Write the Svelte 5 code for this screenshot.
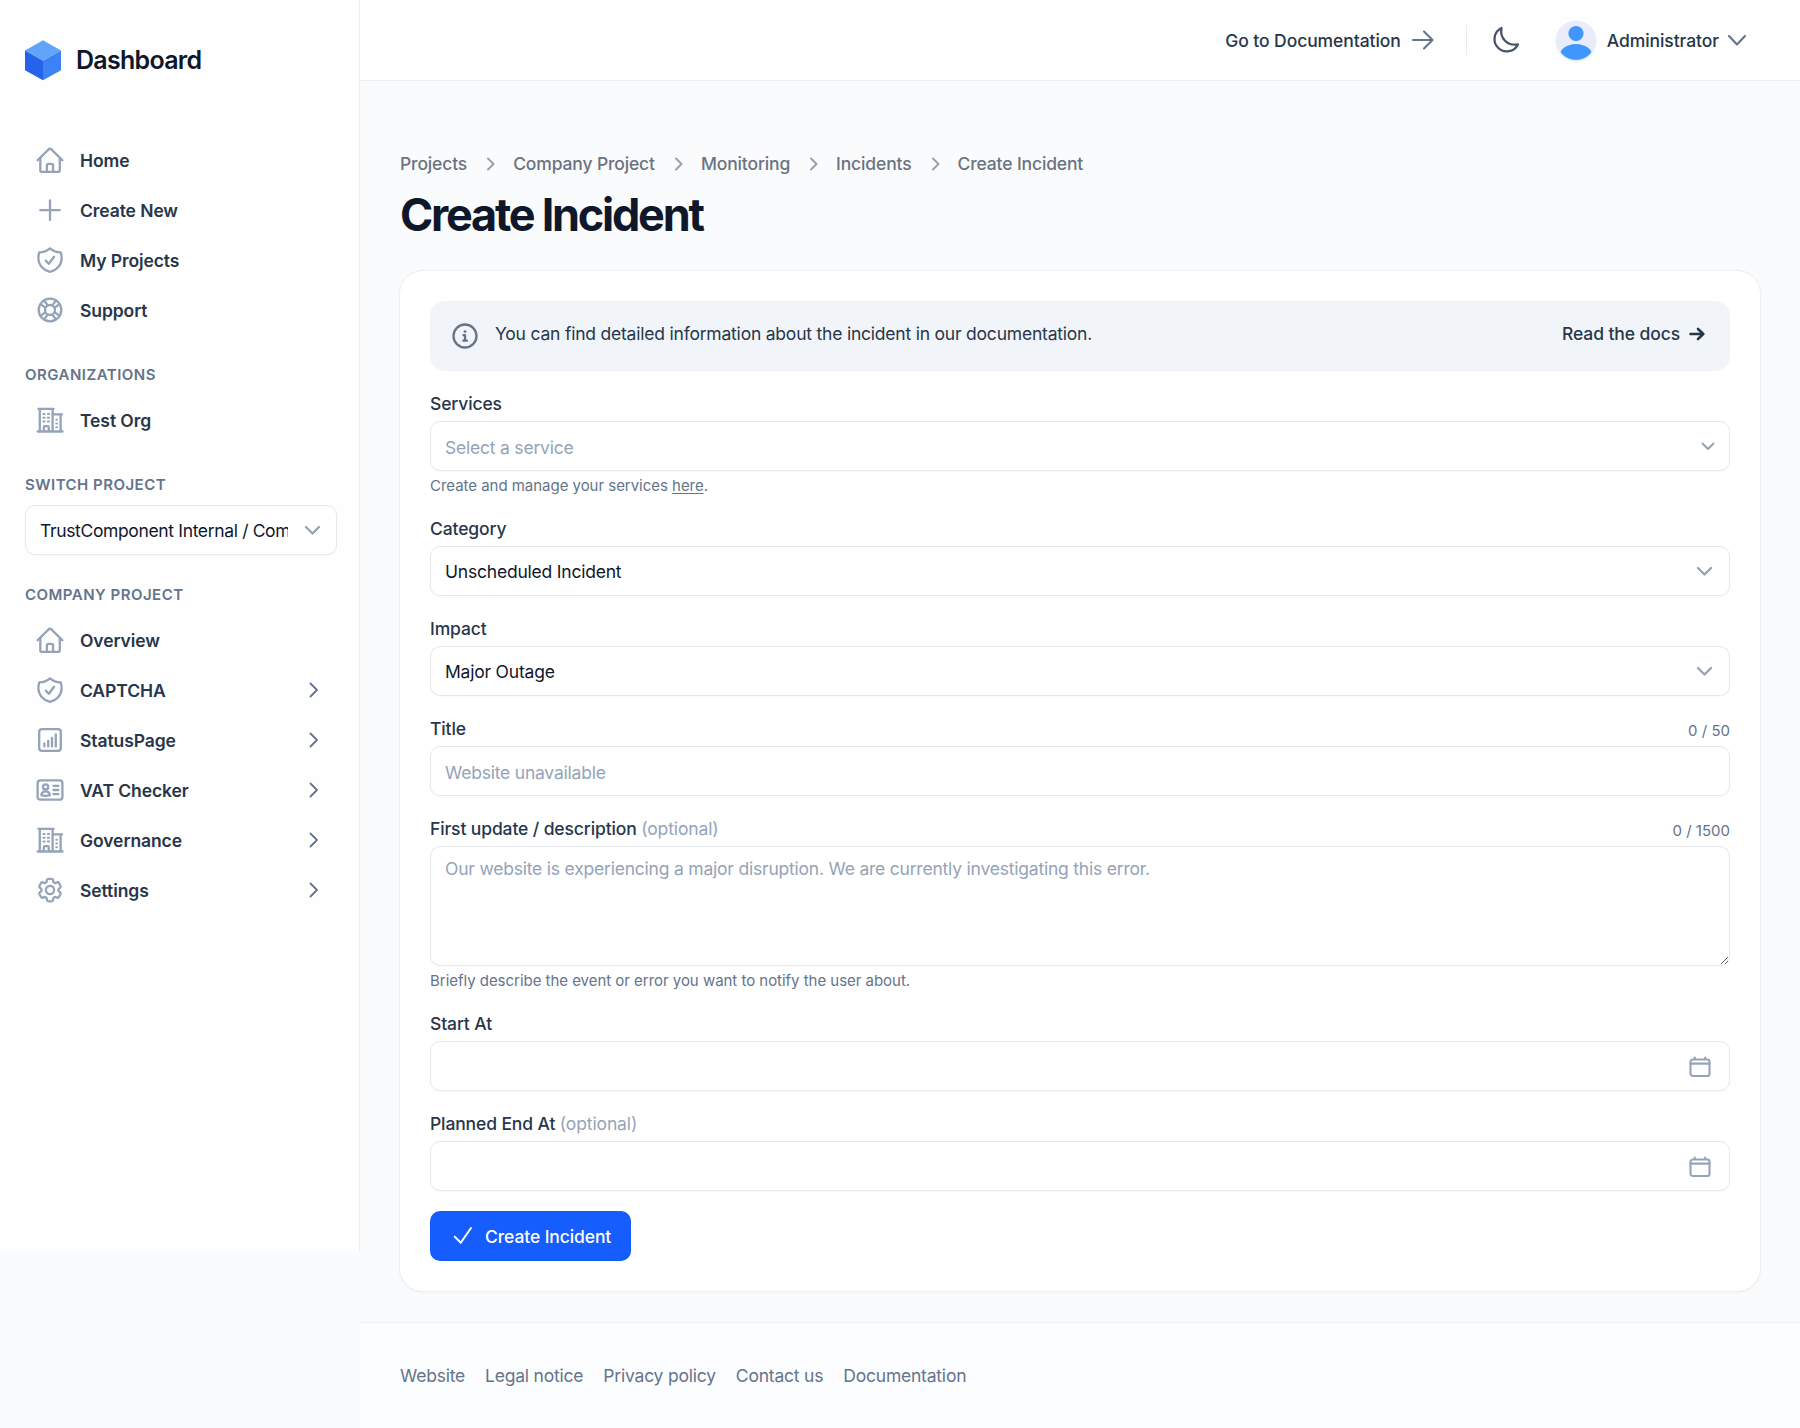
<script lang="ts">
  type NavItem = { label: string; icon: string; children?: boolean };

  const mainNav: NavItem[] = [
    { label: 'Home', icon: 'home' },
    { label: 'Create New', icon: 'plus' },
    { label: 'My Projects', icon: 'shield' },
    { label: 'Support', icon: 'support' },
  ];

  const orgNav: NavItem[] = [{ label: 'Test Org', icon: 'building' }];

  const projectNav: NavItem[] = [
    { label: 'Overview', icon: 'home' },
    { label: 'CAPTCHA', icon: 'shield', children: true },
    { label: 'StatusPage', icon: 'chart', children: true },
    { label: 'VAT Checker', icon: 'card', children: true },
    { label: 'Governance', icon: 'building', children: true },
    { label: 'Settings', icon: 'cog', children: true },
  ];

  const crumbs = ['Projects', 'Company Project', 'Monitoring', 'Incidents', 'Create Incident'];
  const footerLinks = ['Website', 'Legal notice', 'Privacy policy', 'Contact us', 'Documentation'];

  let title = $state('');
  let description = $state('');
  let startAt = $state('');
  let endAt = $state('');
</script>

{#snippet icon(name: string)}
  <svg class="icon" viewBox="0 0 30 30" aria-hidden="true">
    {#if name === 'home'}
      <path d="M2.6 15.3 13.9 4.1a1.5 1.5 0 0 1 2.2 0l11.3 11.2" />
      <path d="M5.3 13v12.2c0 .9.7 1.6 1.6 1.6h16.3c.9 0 1.6-.7 1.6-1.6V13" />
      <path d="M11.9 26.5v-6c0-.9.7-1.6 1.6-1.6h3c.9 0 1.6.7 1.6 1.6v6" />
    {:else if name === 'plus'}
      <path d="M15 5.3v19.6M5.2 15.1h19.6" />
    {:else if name === 'shield'}
      <path d="M15 3.4c-3 2.6-6.5 3.9-10.7 3.9-.7 2.1-1 4.2-.9 6.4.2 6.1 4.7 11.5 11.6 13.1 6.9-1.6 11.4-7 11.6-13.1.1-2.2-.2-4.3-.9-6.4-4.2 0-7.7-1.3-10.7-3.9Z" />
      <path d="m10.8 15.7 3 3.1 5.3-7" />
    {:else if name === 'support'}
      <circle cx="15" cy="15" r="11.3" />
      <circle cx="15" cy="15" r="5" />
      <path d="m9.1 5.6 3.5 4.6M5.6 9.1l4.6 3.5M20.9 5.6l-3.5 4.6M24.4 9.1l-4.6 3.5M9.1 24.4l3.5-4.6M5.6 20.9l4.6-3.5M20.9 24.4l-3.5-4.6M24.4 20.9l-4.6-3.5" />
    {:else if name === 'building'}
      <path d="M2.7 26.5h24.8M3.4 3.8h15.2M4.8 4v22.3M17.6 4v22.3M18 9.4h9M25.6 9.6v16.7M8.8 26v-3.6c0-.7.5-1.2 1.2-1.2h2.6c.7 0 1.2.5 1.2 1.2V26" />
      <path class="windows" d="M8.4 8.9h1.2M12.9 8.9h1.2M8.4 12.7h1.2M12.9 12.7h1.2M8.4 16.5h1.2M12.9 16.5h1.2M21.3 14.8h.6M21.3 18.5h.6M21.3 22.2h.6" />
    {:else if name === 'chart'}
      <rect x="4.2" y="4.2" width="21.6" height="21.6" rx="2.8" />
      <path d="M9.4 18.4v3M13.2 15.8v5.6M17 12.8v8.6M20.8 9.4v12" />
    {:else if name === 'card'}
      <rect x="2.6" y="5.4" width="24.8" height="19.3" rx="2.8" />
      <circle cx="10.6" cy="11.9" r="2.6" />
      <path d="M6.3 20.1c.4-2.4 2-3.7 4.3-3.7s3.9 1.3 4.3 3.7c-2.8.9-5.8.9-8.6 0ZM18.5 10.8h4.9M18.5 15h4.9M18.5 19.2h4.9" />
    {:else if name === 'cog'}
      <g transform="scale(1.25)">
        <path class="scaled" d="M9.594 3.94c.09-.542.56-.94 1.11-.94h2.593c.55 0 1.02.398 1.11.94l.213 1.281c.063.374.313.686.645.87.074.04.147.083.22.127.325.196.72.257 1.075.124l1.217-.456a1.125 1.125 0 0 1 1.37.49l1.296 2.247a1.125 1.125 0 0 1-.26 1.431l-1.003.827c-.293.241-.438.613-.43.992a7.723 7.723 0 0 1 0 .255c-.008.378.137.75.43.991l1.004.827c.424.35.534.955.26 1.43l-1.298 2.247a1.125 1.125 0 0 1-1.369.491l-1.217-.456c-.355-.133-.75-.072-1.076.124a6.47 6.47 0 0 1-.22.128c-.331.183-.581.495-.644.869l-.213 1.281c-.09.543-.56.94-1.11.94h-2.594c-.55 0-1.019-.398-1.11-.94l-.213-1.281c-.062-.374-.312-.686-.644-.87a6.52 6.52 0 0 1-.22-.127c-.325-.196-.72-.257-1.076-.124l-1.217.456a1.125 1.125 0 0 1-1.369-.49l-1.297-2.247a1.125 1.125 0 0 1 .26-1.431l1.004-.827c.292-.24.437-.613.43-.991a6.932 6.932 0 0 1 0-.255c.007-.38-.138-.751-.43-.992l-1.004-.827a1.125 1.125 0 0 1-.26-1.43l1.297-2.247a1.125 1.125 0 0 1 1.37-.491l1.216.456c.356.133.751.072 1.076-.124.072-.044.146-.087.22-.128.332-.183.582-.495.644-.869l.214-1.28Z" />
        <circle class="scaled" cx="12" cy="12" r="3.3" />
      </g>
    {/if}
  </svg>
{/snippet}

{#snippet navList(items: NavItem[])}
  <ul class="nav">
    {#each items as item}
      <li class="nav-item">
        {@render icon(item.icon)}
        <span class="nav-label">{item.label}</span>
        {#if item.children}
          <svg class="nav-chevron" width="10" height="16" viewBox="0 0 10 16"><path d="m1.5 1.5 6.5 6.5-6.5 6.5" /></svg>
        {/if}
      </li>
    {/each}
  </ul>
{/snippet}

{#snippet chevronDown()}
  <svg class="chevron-down" width="17" height="11" viewBox="0 0 17 11"><path d="m2 2 6.5 6.5L15 2" /></svg>
{/snippet}

{#snippet calendar()}
  <svg class="calendar" width="24" height="24" viewBox="0 0 24 24">
    <rect x="2.5" y="4.5" width="19" height="16.5" rx="2.3" />
    <path d="M2.5 8.6h19M6.8 4V2.6M17.2 4V2.6" />
  </svg>
{/snippet}

<div class="layout">
  <aside class="sidebar">
    <div class="brand">
      <svg width="37" height="40" viewBox="0 0 37 40">
        <path fill="#60a5fa" d="M18 .3 36 10.500 18 20.800 0 10.500Z" />
        <path fill="#2563eb" d="M0 10.500 18 20.800V40.300L0 30.300Z" />
        <path fill="#3b82f6" d="M36 10.500 18 20.800V40.300l18-10Z" />
      </svg>
      <span class="brand-name">Dashboard</span>
    </div>

    {@render navList(mainNav)}

    <h2 class="section-label">Organizations</h2>
    {@render navList(orgNav)}

    <h2 class="section-label">Switch Project</h2>
    <button class="control project-select">
      <span class="clip">TrustComponent Internal / Company Project</span>
      {@render chevronDown()}
    </button>

    <h2 class="section-label">Company Project</h2>
    {@render navList(projectNav)}
  </aside>

  <div class="page">
    <header class="topbar">
      <a class="docs-link" href="#docs">
        <span>Go to Documentation</span>
        <svg width="24" height="22" viewBox="0 0 24 22"><path d="M2 11h19M13 2.5l8.5 8.5-8.5 8.5" /></svg>
      </a>
      <span class="divider"></span>
      <button class="theme-toggle" aria-label="Toggle theme">
        <svg width="30" height="30" viewBox="0 0 30 30"><path d="M10.5 3a12.3 12.3 0 1 0 16.4 16.4c-4.6.8-9.600-.4-12.900-3.700-3.300-3.400-4.400-8.100-3.500-12.700Z" /></svg>
      </button>
      <button class="user">
        <svg width="42" height="42" viewBox="0 0 42 42">
          <clipPath id="avatar"><circle cx="21" cy="21" r="19" /></clipPath>
          <circle cx="21" cy="21" r="20.5" fill="#e9ecfb" />
          <circle cx="21" cy="13.500" r="7.600" fill="#4096ff" />
          <ellipse cx="21" cy="36" rx="16.500" ry="12" fill="#4096ff" clip-path="url(#avatar)" />
        </svg>
        <span class="user-name">Administrator</span>
        <svg class="user-chevron" width="20" height="13" viewBox="0 0 20 13"><path d="m2 2 8 8.5L18 2" /></svg>
      </button>
    </header>

    <main class="content">
      <nav class="breadcrumbs">
        {#each crumbs as crumb, i}
          {#if i > 0}
            <svg width="9" height="14" viewBox="0 0 9 14"><path d="m2 1.5 5.5 5.5L2 12.5" /></svg>
          {/if}
          <span>{crumb}</span>
        {/each}
      </nav>
      <h1>Create Incident</h1>

      <section class="card">
        <div class="notice">
          <svg class="info" width="26" height="26" viewBox="0 0 26 26">
            <circle cx="13" cy="13" r="11.5" />
            <circle class="dot" cx="13" cy="8.6" r="1.4" />
            <path d="M11.5 12.2H13v5.3M11.3 17.7h3.6" />
          </svg>
          <p>You can find detailed information about the incident in our documentation.</p>
          <a class="read-docs" href="#docs">
            <span>Read the docs</span>
            <svg width="16" height="14" viewBox="0 0 16 14"><path d="M1.5 7h12.5M9 2l5.3 5L9 12" /></svg>
          </a>
        </div>

        <div class="field">
          <div class="label-row"><label for="services">Services</label></div>
          <button id="services" class="control services">
            <span class="placeholder">Select a service</span>
            <svg class="small-chevron" width="14" height="9" viewBox="0 0 14 9"><path d="M1.5 1.5 7 7l5.5-5.5" /></svg>
          </button>
          <p class="hint">Create and manage your services <a href="#services">here</a>.</p>
        </div>

        <div class="field">
          <div class="label-row"><label for="category">Category</label></div>
          <button id="category" class="control">
            <span>Unscheduled Incident</span>
            {@render chevronDown()}
          </button>
        </div>

        <div class="field">
          <div class="label-row"><label for="impact">Impact</label></div>
          <button id="impact" class="control">
            <span>Major Outage</span>
            {@render chevronDown()}
          </button>
        </div>

        <div class="field">
          <div class="label-row">
            <label for="title">Title</label>
            <span class="counter">{title.length} / 50</span>
          </div>
          <input id="title" class="control" maxlength="50" placeholder="Website unavailable" bind:value={title} />
        </div>

        <div class="field">
          <div class="label-row">
            <label for="description">First update / description <span class="optional">(optional)</span></label>
            <span class="counter">{description.length} / 1500</span>
          </div>
          <textarea
            id="description"
            class="control"
            maxlength="1500"
            placeholder="Our website is experiencing a major disruption. We are currently investigating this error."
            bind:value={description}
          ></textarea>
          <p class="hint">Briefly describe the event or error you want to notify the user about.</p>
        </div>

        <div class="field">
          <div class="label-row"><label for="start">Start At</label></div>
          <div class="control date">
            <input id="start" bind:value={startAt} />
            {@render calendar()}
          </div>
        </div>

        <div class="field">
          <div class="label-row">
            <label for="end">Planned End At <span class="optional">(optional)</span></label>
          </div>
          <div class="control date">
            <input id="end" bind:value={endAt} />
            {@render calendar()}
          </div>
        </div>

        <button class="submit">
          <svg width="20" height="20" viewBox="0 0 20 20"><path d="m1.8 10.8 6 6L18 2" /></svg>
          <span>Create Incident</span>
        </button>
      </section>
    </main>

    <footer class="footer">
      {#each footerLinks as link}
        <a href="#footer">{link}</a>
      {/each}
    </footer>
  </div>
</div>

<style>
  :global(body) {
    background: #f9fbfd;
  }

  .layout {
    display: flex;
    align-items: flex-start;
    height: 1428px;
    overflow: hidden;
    font-family: Inter, "Liberation Sans", sans-serif;
    font-size: 17.5px;
    line-height: 25px;
    color: #27364b;
    letter-spacing: -0.012em;
  }

  .layout *, .layout {
    box-sizing: border-box;
  }

  button, input, textarea {
    font: inherit;
    letter-spacing: inherit;
    color: inherit;
    margin: 0;
    padding: 0;
    border: none;
    background: none;
    text-align: left;
  }

  a {
    color: inherit;
    text-decoration: none;
  }

  p, h1, h2, ul {
    margin: 0;
    padding: 0;
  }

  svg {
    display: block;
    flex-shrink: 0;
    overflow: visible;
  }

  svg path, svg circle, svg rect {
    stroke-linecap: round;
    stroke-linejoin: round;
  }

  .sidebar {
    width: 360px;
    height: 1251px;
    flex-shrink: 0;
    padding: 40px 22px 0 25px;
    background: #fefefe;
    border-right: 1px solid #eceff3;
  }

  .brand {
    display: flex;
    align-items: center;
    gap: 14px;
    height: 40px;
    margin-bottom: 55px;
  }

  .brand-name {
    font-size: 25px;
    font-weight: 600;
    letter-spacing: -0.029em;
    color: #0f172a;
  }

  .nav {
    list-style: none;
  }

  .nav-item {
    display: flex;
    align-items: center;
    height: 50px;
    padding: 0 18px 0 10px;
    font-weight: 600;
    letter-spacing: -0.005em;
  }

  .icon {
    width: 30px;
    height: 30px;
    margin-right: 15px;
    fill: none;
    stroke: #94a3b8;
    stroke-width: 2.3;
  }

  .icon .windows {
    stroke-width: 2;
  }

  .icon .scaled {
    stroke-width: 1.8;
  }

  .nav-chevron {
    margin-left: auto;
    fill: none;
    stroke: #64748b;
    stroke-width: 1.8;
  }

  .section-label {
    margin: 30px 0 10px;
    font-size: 15px;
    line-height: 20px;
    font-weight: 600;
    letter-spacing: 0.032em;
    text-transform: uppercase;
    color: #64748b;
  }

  .control {
    display: flex;
    align-items: center;
    justify-content: space-between;
    width: 100%;
    height: 50px;
    padding: 0 16px 0 14px;
    background: #fff;
    border: 1px solid #e5e8ec;
    border-radius: 10px;
    box-shadow: 0 1px 2px rgba(15, 23, 42, 0.03);
    color: #0f172a;
  }

  .project-select {
    padding-right: 15px;
    letter-spacing: -0.02em;
  }

  .project-select .clip {
    width: 248px;
    overflow: hidden;
    white-space: nowrap;
  }

  .chevron-down, .small-chevron {
    fill: none;
    stroke: #94a3b8;
    stroke-width: 2.3;
  }

  .small-chevron {
    stroke-width: 2;
  }

  .page {
    flex: 1;
    min-width: 0;
  }

  .topbar {
    display: flex;
    align-items: center;
    justify-content: flex-end;
    height: 81px;
    padding-right: 53px;
    background: #fefefe;
    border-bottom: 1px solid #eceff3;
    font-weight: 550;
    letter-spacing: -0.004em;
  }

  .docs-link {
    display: flex;
    align-items: center;
    gap: 10px;
  }

  .docs-link svg, .user-chevron {
    fill: none;
    stroke: #64748b;
    stroke-width: 2.1;
  }

  .divider {
    width: 1px;
    height: 30px;
    margin: 0 24px 0 31px;
    background: #e8ebf0;
  }

  .theme-toggle svg {
    fill: none;
    stroke: #475569;
    stroke-width: 2.3;
  }

  .user {
    display: flex;
    align-items: center;
    margin: 1px 0 0 34px;
  }

  .user-name {
    margin: 0 8px 0 10px;
  }

  .content {
    padding: 70px 39px 30px 40px;
  }

  .breadcrumbs {
    display: flex;
    align-items: center;
    font-weight: 550;
    letter-spacing: -0.008em;
    color: #6b7280;
  }

  .breadcrumbs svg {
    margin: 0 18px 0 19px;
    fill: none;
    stroke: #94a0ae;
    stroke-width: 1.9;
  }

  h1 {
    margin: 14px 0 30px;
    font-size: 45px;
    line-height: 50px;
    font-weight: 700;
    letter-spacing: -0.05em;
    color: #0f172a;
  }

  .card {
    height: 1022px;
    margin-left: -1px;
    padding: 30px;
    background: #fff;
    border: 1px solid #eceff3;
    border-radius: 24px;
    box-shadow: 0 1px 3px rgba(15, 23, 42, 0.03);
  }

  .notice {
    display: flex;
    align-items: flex-start;
    height: 70px;
    margin-bottom: 20px;
    padding: 20px 25px 0 22px;
    background: #f1f5f9;
    border-radius: 15px;
  }

  .info {
    margin: 2px 17px 0 0;
    fill: none;
    stroke: #64748b;
    stroke-width: 2.3;
  }

  .info .dot {
    fill: #64748b;
    stroke: none;
  }

  .read-docs {
    display: flex;
    align-items: center;
    gap: 9px;
    margin-left: auto;
    font-weight: 550;
    letter-spacing: -0.006em;
  }

  .read-docs svg {
    fill: none;
    stroke: #27364b;
    stroke-width: 2.6;
  }

  .field {
    margin-bottom: 20px;
  }

  .label-row {
    display: flex;
    justify-content: space-between;
    align-items: flex-end;
    height: 25px;
    margin-bottom: 5px;
    font-weight: 550;
    letter-spacing: -0.007em;
  }

  .optional {
    font-weight: 400;
    color: #94a3b8;
  }

  .counter {
    line-height: 21px;
    font-size: 15px;
    font-weight: 400;
    letter-spacing: 0;
    color: #64748b;
  }

  .placeholder, .control::placeholder {
    color: #94a3b8;
    opacity: 1;
  }

  .field .control {
    padding-top: 1px;
  }

  .field .services .placeholder {
    padding-top: 2px;
  }

  .field input.control {
    padding-top: 2px;
  }

  .field .services {
    padding-right: 14px;
  }

  .field textarea.control {
    display: block;
    height: 120px;
    padding: 9px 14px;
    resize: vertical;
  }

  .date input {
    flex: 1;
    outline: none;
  }

  .calendar {
    margin-right: 1px;
    fill: none;
    stroke: #94a3b8;
    stroke-width: 2.1;
  }

  .hint {
    margin-top: 5px;
    font-size: 15px;
    line-height: 20px;
    letter-spacing: -0.002em;
    color: #64748b;
  }

  .hint a {
    text-decoration: underline;
    text-underline-offset: 2px;
  }

  .submit {
    display: flex;
    align-items: center;
    gap: 12px;
    height: 50px;
    padding: 0 20px 0 23px;
    border-radius: 10px;
    background: #155dfc;
    color: #fff;
    font-weight: 550;
    letter-spacing: -0.006em;
  }

  .submit svg {
    fill: none;
    stroke: #fff;
    stroke-width: 2;
  }

  .footer {
    display: flex;
    gap: 20px;
    height: 106px;
    padding: 40px;
    background: #fcfdfe;
    border-top: 1px solid #eceff3;
    color: #64748b;
  }
</style>
